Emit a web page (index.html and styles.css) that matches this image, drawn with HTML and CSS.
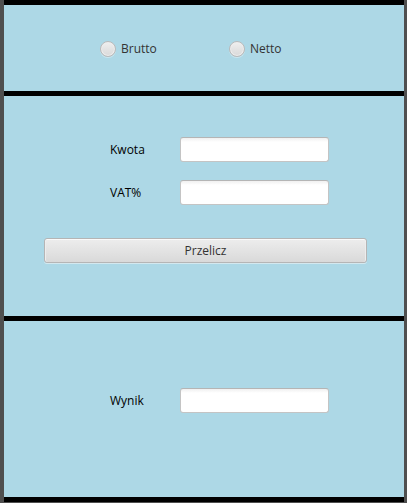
FILE: index.html
```html
<!DOCTYPE html>
<html lang="pl">
<head>
<meta charset="utf-8">
<title>Kalkulator VAT</title>
<link rel="stylesheet" href="styles.css">
</head>
<body>
<form class="calculator">
  <section class="panel modes">
    <label class="mode"><input class="radio" type="radio" name="mode" value="brutto">Brutto</label>
    <label class="mode"><input class="radio" type="radio" name="mode" value="netto">Netto</label>
  </section>
  <section class="panel entry">
    <div class="row">
      <label class="caption" for="amount">Kwota</label>
      <input class="field" id="amount" type="text">
    </div>
    <div class="row">
      <label class="caption" for="vat">VAT%</label>
      <input class="field" id="vat" type="text">
    </div>
    <button class="convert" type="button">Przelicz</button>
  </section>
  <section class="panel result">
    <div class="row">
      <label class="caption" for="result">Wynik</label>
      <input class="field" id="result" type="text">
    </div>
  </section>
</form>
</body>
</html>
```
FILE: styles.css
```css
* {
  box-sizing: border-box;
}

body {
  margin: 0;
  padding: 0 3px 0 4px;
  background: #4f4f4f;
  font: 12px/16px "Open Sans", "Noto Sans", sans-serif;
  color: #000;
}

.calculator {
  display: flex;
  flex-direction: column;
  gap: 5px;
  margin-bottom: 1px;
  padding: 5px 0;
  background: #000;
}

.panel {
  background: #add8e6;
}

.modes {
  display: grid;
  grid-template-columns: 129px 1fr;
  padding: 35px 36px 34px 96px;
  color: #333;
}

.mode {
  display: flex;
  align-items: center;
  justify-self: start;
  gap: 5px;
  height: 17px;
}

.radio {
  appearance: none;
  width: 16px;
  height: 16px;
  margin: 0;
  border: 1px solid #bababa;
  border-radius: 50%;
  background: linear-gradient(#efefef, #d9d9d9);
  box-shadow: inset 0 0 0 1px #ededed, 0 1px 0 #cce6ee;
}

.radio:checked {
  background: radial-gradient(circle, #333 3px, #e4e4e4 4px);
}

.entry {
  display: flex;
  flex-direction: column;
  gap: 18px;
  padding: 41px 0 53px;
}

.row {
  display: flex;
  align-items: center;
  padding: 0 75px 0 106px;
}

.caption {
  width: 70px;
}

.field {
  flex: 1;
  min-width: 0;
  height: 25px;
  padding: 0 7px;
  border: 1px solid #c4c4c4;
  border-top-color: #b5b5b5;
  border-radius: 3px;
  background: linear-gradient(#f0f0f0, #fff 4px);
  font: inherit;
}

.convert {
  height: 25px;
  margin: 15px 37px 0 40px;
  padding: 0;
  border: 1px solid #b5b5b5;
  border-radius: 3px;
  background: linear-gradient(#ededed, #d9d9d9);
  box-shadow: inset 0 1px 0 #fafafa, inset 1px 0 0 #ededed, inset -1px 0 0 #ededed, 0 1px 0 #d3e8ef;
  color: #333;
  font: inherit;
}

.result {
  padding: 67px 0 84px;
}
```
